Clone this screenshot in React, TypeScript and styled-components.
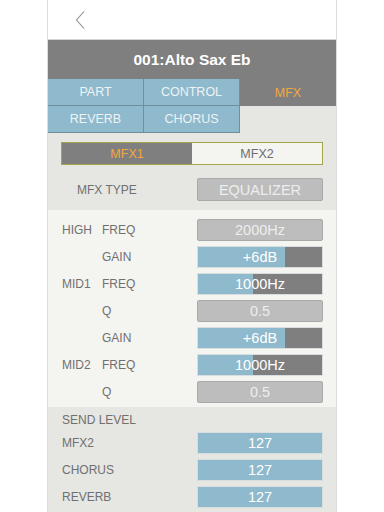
import React from "react";
import styled, { createGlobalStyle } from "styled-components";

const GlobalStyle = createGlobalStyle`
  html, body {
    margin: 0;
    padding: 0;
    background: #ffffff;
    font-family: "Liberation Sans", Arial, sans-serif;
  }
`;

const blue = "#8fb9cc";
const gray = "#7f7f7f";
const orange = "#f2a93b";

const Panel = styled.div`
  width: 288px;
  margin: 0 auto;
  border-left: 1px solid #dcdcdc;
  border-right: 1px solid #dcdcdc;
  background: #e6e6e2;
  min-height: 512px;
`;

const TopBar = styled.div`
  height: 39px;
  background: #ffffff;
  border-bottom: 1px solid #d4d4d4;
  display: flex;
  align-items: center;
  padding-left: 25px;
`;

const BackButton = styled.button`
  border: none;
  background: none;
  padding: 0;
  width: 14px;
  height: 20px;
  display: flex;
  align-items: center;
  justify-content: center;
`;

const TitleBar = styled.div`
  height: 39px;
  background: ${gray};
  color: #ffffff;
  font-weight: bold;
  font-size: 15.5px;
  display: flex;
  align-items: center;
  justify-content: center;
`;

const Tabs = styled.div`
  display: grid;
  grid-template-columns: 96px 96px 96px;
  grid-auto-rows: 27px;
  background: #e6e6e2;
`;

const Tab = styled.div<{ $active?: boolean; $empty?: boolean }>`
  display: flex;
  align-items: center;
  justify-content: center;
  font-size: 12.5px;
  color: ${(p) => (p.$active ? orange : "#eef3f5")};
  background: ${(p) => (p.$empty ? "transparent" : p.$active ? gray : blue)};
  border-right: ${(p) => (p.$empty || p.$active ? "none" : "1px solid #6e8f9e")};
  border-bottom: ${(p) => (p.$empty || p.$active ? "none" : "1px solid #6e8f9e")};
  box-sizing: border-box;
`;

const Section = styled.div<{ $pad: string; $light?: boolean }>`
  background: ${(p) => (p.$light ? "#f4f4f0" : "#e6e6e2")};
  padding: ${(p) => p.$pad};
`;

const Segmented = styled.div`
  display: grid;
  grid-template-columns: 1fr 1fr;
  height: 21px;
  margin: 0 0 0 -1px;
  border: 1px solid #a6a34a;
`;

const Segment = styled.div<{ $active?: boolean }>`
  display: flex;
  align-items: center;
  justify-content: center;
  font-size: 12.5px;
  background: ${(p) => (p.$active ? gray : "#f4f4f0")};
  color: ${(p) => (p.$active ? orange : "#6e6e6e")};
`;

const TypeRow = styled.div`
  display: flex;
  align-items: center;
  justify-content: space-between;
  margin-top: 13px;
  padding-left: 15px;
`;

const Row = styled.div`
  display: flex;
  align-items: center;
  height: 27px;
`;

const Group = styled.span`
  width: 40px;
  font-size: 12px;
  color: #707070;
`;

const Param = styled.span`
  flex: 1;
  font-size: 12px;
  color: #707070;
`;

const Label = styled.span`
  font-size: 12px;
  color: #707070;
`;

const Value = styled.div<{ $kind: "gray" | "blue" | "bar" }>`
  position: relative;
  width: 126px;
  height: 22px;
  box-sizing: border-box;
  border: 1px solid ${(p) => (p.$kind === "gray" ? "#a9a9a9" : "#d8dde0")};
  border-radius: ${(p) => (p.$kind === "gray" ? "2px" : "0")};
  background: ${(p) =>
    p.$kind === "gray" ? "#bdbdbd" : p.$kind === "blue" ? blue : gray};
  color: ${(p) => (p.$kind === "gray" ? "#ededed" : "#ffffff")};
  font-size: 14.5px;
  display: flex;
  align-items: center;
  justify-content: center;
  overflow: hidden;
`;

const TypeValue = styled(Value)`
  height: 23px;
`;

const Fill = styled.div`
  position: absolute;
  left: 0;
  top: 0;
  bottom: 0;
  background: ${blue};
`;

const ValueText = styled.span`
  position: relative;
`;

const SendTitle = styled.div`
  font-size: 12px;
  color: #707070;
  height: 18px;
  display: flex;
  align-items: center;
`;

type EqParam = {
  group?: string;
  name: string;
  value: string;
  fill?: number;
};

const eqParams: EqParam[] = [
  { group: "HIGH", name: "FREQ", value: "2000Hz" },
  { name: "GAIN", value: "+6dB", fill: 70 },
  { group: "MID1", name: "FREQ", value: "1000Hz", fill: 44 },
  { name: "Q", value: "0.5" },
  { name: "GAIN", value: "+6dB", fill: 70 },
  { group: "MID2", name: "FREQ", value: "1000Hz", fill: 44 },
  { name: "Q", value: "0.5" },
];

const sends = ["MFX2", "CHORUS", "REVERB"];

export default function App() {
  return (
    <>
      <GlobalStyle />
      <Panel>
        <TopBar>
          <BackButton aria-label="back">
            <svg width="12" height="20" viewBox="0 0 12 20">
              <path d="M10 1.5 L2.5 10 L10 18.5" fill="none" stroke="#8e8e8e" strokeWidth="1.1" />
            </svg>
          </BackButton>
        </TopBar>
        <TitleBar>001:Alto Sax Eb</TitleBar>
        <Tabs>
          <Tab>PART</Tab>
          <Tab>CONTROL</Tab>
          <Tab $active>MFX</Tab>
          <Tab>REVERB</Tab>
          <Tab>CHORUS</Tab>
          <Tab $empty />
        </Tabs>
        <Section $pad="9px 13px 9px 14px">
          <Segmented>
            <Segment $active>MFX1</Segment>
            <Segment>MFX2</Segment>
          </Segmented>
          <TypeRow>
            <Label>MFX TYPE</Label>
            <TypeValue $kind="gray">EQUALIZER</TypeValue>
          </TypeRow>
        </Section>
        <Section $light $pad="6px 13px 2px 14px">
          {eqParams.map((p, i) => (
            <Row key={i}>
              <Group>{p.group ?? ""}</Group>
              <Param>{p.name}</Param>
              {p.fill !== undefined ? (
                <Value $kind="bar">
                  <Fill style={{ width: `${p.fill}%` }} />
                  <ValueText>{p.value}</ValueText>
                </Value>
              ) : (
                <Value $kind="gray">{p.value}</Value>
              )}
            </Row>
          ))}
        </Section>
        <Section $pad="4px 13px 5px 14px">
          <SendTitle>SEND LEVEL</SendTitle>
          {sends.map((s) => (
            <Row key={s}>
              <Param>{s}</Param>
              <Value $kind="blue">127</Value>
            </Row>
          ))}
        </Section>
      </Panel>
    </>
  );
}
